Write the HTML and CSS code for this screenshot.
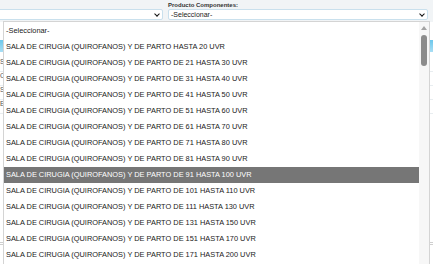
FILE: index.html
```html
<!DOCTYPE html>
<html lang="es">
<head>
  <meta charset="UTF-8" />
  <title>Producto Componentes</title>
  <link rel="stylesheet" href="styles.css">
</head>
<body>
  <div class="page">
    <div class="filters">
      <div class="field field-first">
        <span class="field-label">&nbsp;</span>
        <div class="select">
          <span class="select-text"></span>
          <span class="chevron"></span>
        </div>
      </div>
      <div class="field field-second">
        <span class="field-label">Producto Componentes:</span>
        <div class="select">
          <span class="select-text">-Seleccionar-</span>
          <span class="chevron"></span>
        </div>
      </div>
    </div>

    <div class="panel">
      <div class="panel-head"></div>
      <div class="panel-row">S</div>
      <div class="panel-row">C</div>
      <div class="panel-row">S</div>
      <div class="panel-row">E</div>
      <div class="panel-foot"></div>
    </div>

    <div class="listbox">
      <ul class="options">
        <li>-Seleccionar-</li>
        <li>SALA DE CIRUGIA (QUIROFANOS) Y DE PARTO HASTA 20 UVR</li>
        <li>SALA DE CIRUGIA (QUIROFANOS) Y DE PARTO DE 21 HASTA 30 UVR</li>
        <li>SALA DE CIRUGIA (QUIROFANOS) Y DE PARTO DE 31 HASTA 40 UVR</li>
        <li>SALA DE CIRUGIA (QUIROFANOS) Y DE PARTO DE 41 HASTA 50 UVR</li>
        <li>SALA DE CIRUGIA (QUIROFANOS) Y DE PARTO DE 51 HASTA 60 UVR</li>
        <li>SALA DE CIRUGIA (QUIROFANOS) Y DE PARTO DE 61 HASTA 70 UVR</li>
        <li>SALA DE CIRUGIA (QUIROFANOS) Y DE PARTO DE 71 HASTA 80 UVR</li>
        <li>SALA DE CIRUGIA (QUIROFANOS) Y DE PARTO DE 81 HASTA 90 UVR</li>
        <li class="selected">SALA DE CIRUGIA (QUIROFANOS) Y DE PARTO DE 91 HASTA 100 UVR</li>
        <li>SALA DE CIRUGIA (QUIROFANOS) Y DE PARTO DE 101 HASTA 110 UVR</li>
        <li>SALA DE CIRUGIA (QUIROFANOS) Y DE PARTO DE 111 HASTA 130 UVR</li>
        <li>SALA DE CIRUGIA (QUIROFANOS) Y DE PARTO DE 131 HASTA 150 UVR</li>
        <li>SALA DE CIRUGIA (QUIROFANOS) Y DE PARTO DE 151 HASTA 170 UVR</li>
        <li>SALA DE CIRUGIA (QUIROFANOS) Y DE PARTO DE 171 HASTA 200 UVR</li>
      </ul>
      <div class="scrollbar">
        <span class="arrow-up"></span>
        <span class="thumb"></span>
      </div>
    </div>
  </div>
</body>
</html>
```

FILE: styles.css
```css
* {
  margin: 0;
  padding: 0;
  box-sizing: border-box;
  font-family: 'Liberation Sans', Arial, sans-serif;
}

body {
  width: 433px;
  height: 264px;
  overflow: hidden;
  background: #ffffff;
  color: #1c1c1c;
}

.page {
  position: relative;
  height: 264px;
  overflow: hidden;
}

/* top filter bar */
.filters {
  display: flex;
  gap: 5px;
  height: 22px;
  padding: 0 5px 0 0;
  margin-left: -10px;
  background: #f1f4f6;
}

.field {
  display: flex;
  flex-direction: column;
}

.field-first {
  width: 173px;
}

.field-second {
  flex: 1;
}

.field-label {
  height: 9px;
  padding-top: 2px;
  font-size: 6px;
  line-height: 7px;
  font-weight: bold;
  color: #333;
}

.select {
  display: flex;
  align-items: center;
  justify-content: space-between;
  height: 11px;
  padding: 0 3px 0 2px;
  background: #fff;
  border: 1px solid #c9e0ed;
  border-radius: 2px;
}

.select-text {
  font-size: 7px;
  color: #222;
}

.chevron {
  width: 4px;
  height: 4px;
  margin-top: -2px;
  border-right: 1.5px solid #111;
  border-bottom: 1.5px solid #111;
  transform: rotate(45deg);
}

/* content behind the dropdown */
.panel {
  display: flex;
  flex-direction: column;
  margin-top: 18px;
}

.panel-head {
  height: 12px;
  margin-bottom: 6px;
  background: linear-gradient(#6cc7ec, #a9def4);
}

.panel-row {
  height: 14px;
  font-size: 7px;
  line-height: 8px;
  color: #555;
  border-bottom: 1px solid #e8edf0;
}

.panel-foot {
  margin-top: 128px;
  height: 3px;
  border-top: 1px solid #cfcfcf;
  border-bottom: 1px solid #cfcfcf;
}

/* open dropdown list, over the page */
.listbox {
  position: absolute;
  left: 3px;
  top: 21px;
  width: 427px;
  height: 260px;
  display: flex;
  background: #fff;
  border: 1px solid #d4d4d4;
  border-bottom: none;
}

.options {
  flex: 1;
  list-style: none;
  padding-top: 1px;
}

.options li {
  height: 16px;
  padding-left: 2px;
  font-size: 7.4px;
  line-height: 16px;
  white-space: nowrap;
  color: #1a1a1a;
}

.options li.selected {
  background: #767676;
  color: #fff;
}

.scrollbar {
  position: relative;
  width: 10px;
  background: #f7f7f7;
}

.arrow-up {
  position: absolute;
  left: 2px;
  top: 4px;
  border-left: 3px solid transparent;
  border-right: 3px solid transparent;
  border-bottom: 4px solid #a3a3a3;
}

.thumb {
  position: absolute;
  left: 2px;
  top: 13px;
  width: 6px;
  height: 31px;
  border-radius: 3px;
  background: #8c8c8c;
}
```
